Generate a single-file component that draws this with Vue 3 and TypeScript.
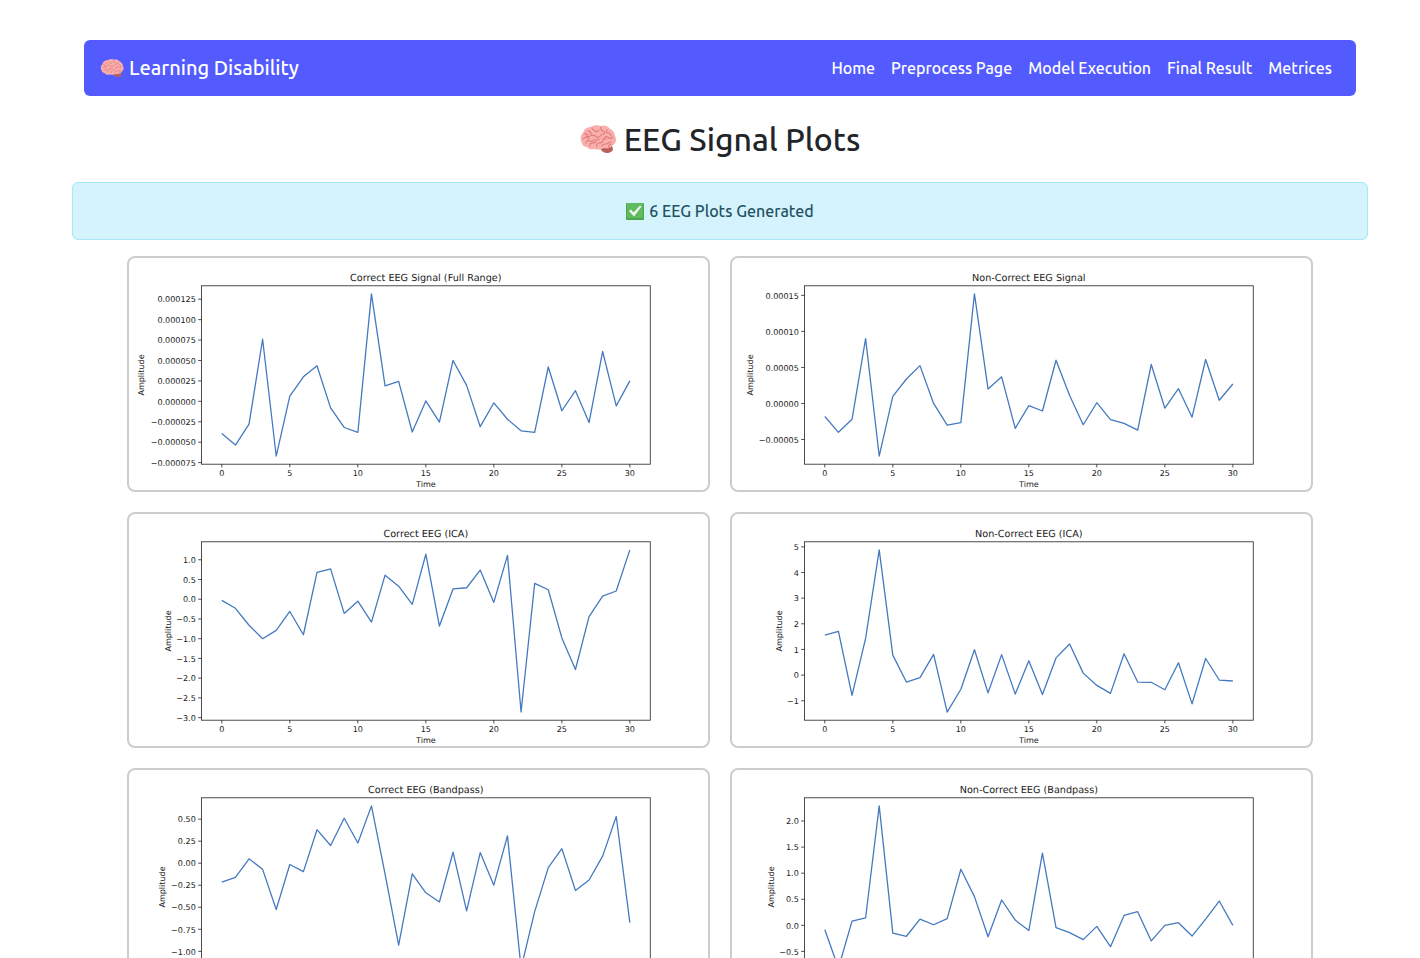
<script setup lang="ts">
interface Plot {
  title: string
  ticks: number[]
  digits: number
  labelX: number
  values: number[]
}

const links: string[] = ['Home', 'Preprocess Page', 'Model Execution', 'Final Result', 'Metrices']

const plots: Plot[] = [
  {
    title: 'Correct EEG Signal (Full Range)',
    ticks: [125, 100, 75, 50, 25, 0, -25, -50, -75].map((v) => v / 1e6),
    digits: 6,
    labelX: 19,
    values: [
      -39.5, -53.5, -28, 76, -67, 6.5, 30, 43.5, -8, -32, -38, 131.5, 19, 24.5, -37.5, 0.5, -25.5, 50, 19.5, -31, -2,
      -22, -36, -38, 42, -11.5, 13, -26, 61, -5.5, 25,
    ].map((v) => v / 1e6),
  },
  {
    title: 'Non-Correct EEG Signal',
    ticks: [15, 10, 5, 0, -5].map((v) => v / 1e5),
    digits: 5,
    labelX: 26,
    values: [
      -1.8, -4, -2.2, 9, -7.3, 1, 3.4, 5.25, 0, -3, -2.65, 15.2, 2, 3.7, -3.45, -0.3, -1.05, 6, 1.1, -2.95, 0.1, -2.25,
      -2.75, -3.7, 5.4, -0.65, 2.05, -1.9, 6.1, 0.45, 2.7,
    ].map((v) => v / 1e5),
  },
  {
    title: 'Correct EEG (ICA)',
    ticks: [1, 0.5, 0, -0.5, -1, -1.5, -2, -2.5, -3],
    digits: 1,
    labelX: 52,
    values: [
      -0.03, -0.23, -0.66, -1, -0.79, -0.31, -0.9, 0.68, 0.77, -0.36, -0.05, -0.58, 0.61, 0.33, -0.13, 1.14, -0.68,
      0.26, 0.29, 0.74, -0.08, 1.11, -2.86, 0.4, 0.24, -0.98, -1.78, -0.44, 0.08, 0.21, 1.25,
    ],
  },
  {
    title: 'Non-Correct EEG (ICA)',
    ticks: [5, 4, 3, 2, 1, 0, -1],
    digits: 0,
    labelX: 62,
    values: [
      1.56, 1.71, -0.79, 1.43, 4.88, 0.78, -0.27, -0.1, 0.81, -1.44, -0.55, 0.99, -0.69, 0.8, -0.74, 0.56, -0.76, 0.67,
      1.21, 0.08, -0.4, -0.71, 0.83, -0.27, -0.28, -0.57, 0.48, -1.12, 0.65, -0.19, -0.23,
    ],
  },
  {
    title: 'Correct EEG (Bandpass)',
    ticks: [0.5, 0.25, 0, -0.25, -0.5, -0.75, -1, -1.25],
    digits: 2,
    labelX: 45,
    values: [
      -0.215, -0.16, 0.05, -0.07, -0.525, -0.015, -0.095, 0.38, 0.2, 0.51, 0.23, 0.65, -0.12, -0.93, -0.12, -0.335,
      -0.44, 0.125, -0.54, 0.12, -0.25, 0.31, -1.19, -0.55, -0.05, 0.165, -0.31, -0.19, 0.08, 0.53, -0.675,
    ],
  },
  {
    title: 'Non-Correct EEG (Bandpass)',
    ticks: [2, 1.5, 1, 0.5, 0, -0.5],
    digits: 1,
    labelX: 52,
    values: [
      -0.085, -0.82, 0.08, 0.145, 2.29, -0.15, -0.21, 0.12, 0.01, 0.13, 1.075, 0.55, -0.22, 0.485, 0.1, -0.1, 1.385,
      -0.045, -0.14, -0.275, -0.02, -0.41, 0.19, 0.26, -0.3, 0, 0.05, -0.205, 0.12, 0.465, 0,
    ],
  },
]

// A 10 x 4 inch figure, measured in points.
const figure = { width: 720, height: 288 }
const frame = {
  left: figure.width * 0.125,
  right: figure.width * 0.9,
  top: figure.height * 0.12,
  bottom: figure.height * 0.89,
}
const centerX = (frame.left + frame.right) / 2
const centerY = (frame.top + frame.bottom) / 2
const timeTicks: number[] = [0, 5, 10, 15, 20, 25, 30]

// The data fills the frame with a 5 % margin on every side.
function scaleX(t: number): number {
  const width = frame.right - frame.left
  return frame.left + width / 22 + (t / 30) * (width / 1.1)
}

function scaleY(plot: Plot, v: number): number {
  const min = Math.min(...plot.values)
  const max = Math.max(...plot.values)
  const height = frame.bottom - frame.top
  return frame.bottom - height / 22 - ((v - min) / (max - min)) * (height / 1.1)
}

function points(plot: Plot): string {
  return plot.values.map((v, i) => `${scaleX(i).toFixed(1)},${scaleY(plot, v).toFixed(1)}`).join(' ')
}

function tickLabel(plot: Plot, v: number): string {
  return (v < 0 ? '\u2212' : '') + Math.abs(v).toFixed(plot.digits)
}
</script>

<template>
  <svg class="sprite" aria-hidden="true">
    <symbol id="brain" viewBox="0 0 36 28">
      <path fill="#b9605a" d="M19 22c2 3 4 6 8 6 3 0 6-2 6-4l-1-3-9-1z" />
      <path
        fill="#f9b0ad"
        d="M2 18C0 15 0 10 3 8c1-4 4-6 8-6 2-2 7-2 10-1 3-1 7 0 8 2 4 2 6 5 6 8 2 3 1 7-2 9-2 3-6 4-9 3-3 2-7 2-10 1-3 1-6 0-7-2-3 0-5-2-5-4z"
      />
      <g fill="none" stroke="#df7a78" stroke-width="1.1" stroke-linecap="round" stroke-linejoin="round">
        <path d="M4 9c2-1 3 0 4 1M3 14c2-2 4-2 6 0M8 6c2 0 3 1 3 3s2 2 3 1M12 3c0 2 2 2 3 3s3 1 4-1" />
        <path d="M6 18c0-2 2-3 4-2s4 0 4-2M10 21c-1-2 1-3 3-3s3-1 3-3M15 10c0 2 2 3 4 2s2-3 4-3" />
        <path d="M21 2c-1 2 0 3 2 4s2 2 1 3M27 5c-1 1-1 3 1 3s3 1 3 3M25 12c2-1 3 0 4 1s3 0 4-1" />
        <path d="M17 22c-1-2 0-4 2-4s4-1 4-3 2-2 3-1M22 21c0-2 2-2 4-2s3-2 5-2M29 22c-1-1 0-2 2-3M6 11c1 1 3 1 4 0M19 15l-2-1" />
      </g>
    </symbol>
  </svg>

  <main class="page">
    <nav class="navbar">
      <a class="brand" href="#">
        <svg class="brand-icon" role="img" aria-label="Brain"><use href="#brain" /></svg>
        <span>Learning Disability</span>
      </a>
      <ul class="links">
        <li v-for="link in links" :key="link"><a href="#">{{ link }}</a></li>
      </ul>
    </nav>

    <h2 class="heading">
      <svg class="heading-icon" aria-hidden="true"><use href="#brain" /></svg>
      <span>EEG Signal Plots</span>
    </h2>

    <div class="alert" role="alert">
      <svg class="check" viewBox="0 0 18 17" aria-hidden="true">
        <rect width="18" height="17" rx="1" fill="#4aa84c" />
        <rect x="1" y="0" width="16" height="15" rx="1" fill="#5fbb5f" />
        <path d="M3 8l2-1.500 2.500 3L14 2.500l1.500 1L8 13.500z" fill="#f1f6f1" />
      </svg>
      <span>{{ plots.length }} EEG Plots Generated</span>
    </div>

    <section class="gallery">
      <figure v-for="plot in plots" :key="plot.title" class="card">
        <svg class="plot" :viewBox="`0 0 ${figure.width} ${figure.height}`" role="img" :aria-label="plot.title">
          <text class="title" :x="centerX" :y="frame.top - 6">{{ plot.title }}</text>
          <polyline class="signal" :points="points(plot)" />
          <rect
            class="frame"
            :x="frame.left"
            :y="frame.top"
            :width="frame.right - frame.left"
            :height="frame.bottom - frame.top"
          />
          <g v-for="t in timeTicks" :key="`t${t}`">
            <line class="tick" :x1="scaleX(t)" :x2="scaleX(t)" :y1="frame.bottom" :y2="frame.bottom + 4" />
            <text class="label middle" :x="scaleX(t)" y="271">{{ t }}</text>
          </g>
          <g v-for="v in plot.ticks" :key="`v${v}`">
            <line class="tick" :x1="frame.left - 4" :x2="frame.left" :y1="scaleY(plot, v)" :y2="scaleY(plot, v)" />
            <text class="label end" :x="frame.left - 7" :y="scaleY(plot, v) + 4">{{ tickLabel(plot, v) }}</text>
          </g>
          <text class="label middle" :x="centerX" y="285">Time</text>
          <text class="label middle" :transform="`translate(${plot.labelX} ${centerY}) rotate(-90)`">Amplitude</text>
        </svg>
      </figure>
    </section>
  </main>
</template>

<style>
body {
  margin: 0;
  background: #fff;
}
</style>

<style scoped>
.sprite {
  position: absolute;
  width: 0;
  height: 0;
}

.page {
  padding: 40px 52px 40px 72px;
  font-family: Ubuntu, 'Noto Sans', sans-serif;
  font-size: 16px;
  font-weight: 500;
  line-height: 1.5;
  color: #212529;
}

.navbar {
  display: flex;
  align-items: center;
  justify-content: space-between;
  margin: 0 12px;
  padding: 8px 16px;
  border-radius: 6px;
  background: #535bff;
}

.navbar a {
  color: #fff;
  text-decoration: none;
}

.brand {
  display: flex;
  align-items: center;
  gap: 5px;
  font-size: 20px;
}

.brand-icon {
  width: 24px;
  height: 18px;
}

.links {
  display: flex;
  margin: 0;
  padding: 0;
  list-style: none;
}

.links a {
  display: block;
  padding: 8px;
}

.heading {
  display: flex;
  align-items: center;
  justify-content: center;
  gap: 8px;
  margin: 24px 0;
  font-size: 32px;
  font-weight: 550;
  line-height: 1.2;
}

.heading-icon {
  width: 36px;
  height: 28px;
}

.alert {
  display: flex;
  align-items: center;
  justify-content: center;
  gap: 5px;
  margin-bottom: 16px;
  padding: 16px;
  border: 1px solid #a6e8f6;
  border-radius: 6px;
  background: #d4f3fc;
  color: #1f5264;
}

.check {
  width: 18px;
  height: 17px;
}

.gallery {
  display: flex;
  flex-wrap: wrap;
  justify-content: center;
  gap: 20px;
}

.card {
  box-sizing: border-box;
  width: 45%;
  margin: 0;
  border: 2px solid #ccc;
  border-radius: 8px;
}

.plot {
  display: block;
  width: 100%;
  font-family: 'DejaVu Sans', sans-serif;
  font-weight: 400;
  text-rendering: geometricPrecision;
}

.plot text {
  fill: #1a1a1a;
}

.title {
  font-size: 12px;
  text-anchor: middle;
}

.label {
  font-size: 10px;
}

.middle {
  text-anchor: middle;
}

.end {
  text-anchor: end;
}

.signal {
  fill: none;
  stroke: #4479bf;
  stroke-width: 1.6;
  stroke-linejoin: round;
}

.frame {
  fill: none;
  stroke: #222;
  stroke-width: 1;
}

.tick {
  stroke: #222;
  stroke-width: 1;
}
</style>
